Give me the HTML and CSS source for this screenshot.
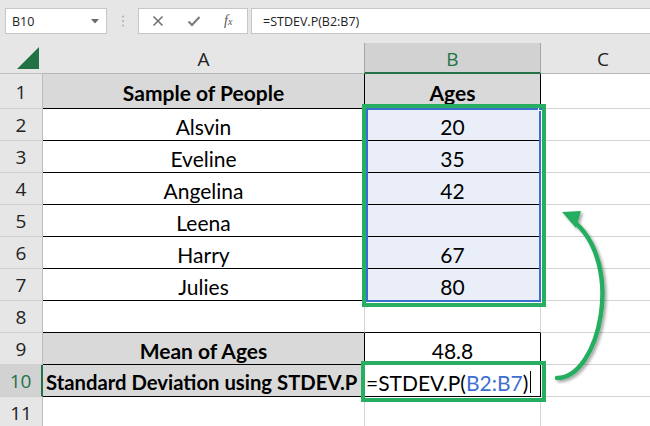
FILE: index.html
```html
<!DOCTYPE html>
<html>
<head>
<meta charset="utf-8">
<link rel="stylesheet" href="styles.css">
</head>
<body>
<div class="app">
  <div class="toolbar">
    <div class="namebox">
      <span class="nb-text">B10</span>
      <svg class="caret" width="8" height="5" viewBox="0 0 8 5"><path d="M0 0 H8 L4 4.5 Z" fill="#6b6b6b"/></svg>
    </div>
    <div class="grip">
      <svg width="4" height="12" viewBox="0 0 4 12"><circle cx="2" cy="1.5" r="1.1" fill="#b3b3b3"/><circle cx="2" cy="6" r="1.1" fill="#b3b3b3"/><circle cx="2" cy="10.5" r="1.1" fill="#b3b3b3"/></svg>
    </div>
    <div class="fxbox">
      <svg class="ico" width="12" height="12" viewBox="0 0 12 12"><path d="M1.5 1.5 L10.5 10.5 M10.5 1.5 L1.5 10.5" stroke="#6e6e6e" stroke-width="1.5" fill="none"/></svg>
      <svg class="ico" width="14" height="12" viewBox="0 0 14 12"><path d="M1.5 6.5 L5 10 L12.5 2" stroke="#7a7a7a" stroke-width="2" fill="none"/></svg>
      <span class="fx">f<span class="fx-x">x</span></span>
    </div>
    <div class="formula">=STDEV.P(B2:B7)</div>
  </div>

  <div class="sheet">
    <div class="corner"><svg width="23" height="23" viewBox="0 0 23 23"><path d="M0 22 L22 0 L22 22 Z" fill="#217346"/></svg></div>
    <div class="colh">A</div>
    <div class="colh sel">B</div>
    <div class="colh last">C</div>

    <div class="rowh">1</div>
    <div class="cell bd gray bold">Sample of People</div>
    <div class="cell bd gray bold">Ages</div>
    <div class="cell c"></div>

    <div class="rowh">2</div>
    <div class="cell bd">Alsvin</div>
    <div class="cell bd hl">20</div>
    <div class="cell c"></div>

    <div class="rowh">3</div>
    <div class="cell bd">Eveline</div>
    <div class="cell bd hl">35</div>
    <div class="cell c"></div>

    <div class="rowh">4</div>
    <div class="cell bd">Angelina</div>
    <div class="cell bd hl">42</div>
    <div class="cell c"></div>

    <div class="rowh">5</div>
    <div class="cell bd">Leena</div>
    <div class="cell bd hl"></div>
    <div class="cell c"></div>

    <div class="rowh">6</div>
    <div class="cell bd">Harry</div>
    <div class="cell bd hl">67</div>
    <div class="cell c"></div>

    <div class="rowh">7</div>
    <div class="cell bd">Julies</div>
    <div class="cell bd hl">80</div>
    <div class="cell c"></div>

    <div class="rowh">8</div>
    <div class="cell bb"></div>
    <div class="cell bb"></div>
    <div class="cell c"></div>

    <div class="rowh">9</div>
    <div class="cell bd gray bold">Mean of Ages</div>
    <div class="cell bd">48.8</div>
    <div class="cell c"></div>

    <div class="rowh active">10</div>
    <div class="cell bd gray bold left">Standard Deviation using STDEV.P</div>
    <div class="cell bd left edit">=STDEV.P(<span class="ref">B2:B7</span>)<span class="cursor"></span></div>
    <div class="cell c"></div>

    <div class="rowh">11</div>
    <div class="cell g"></div>
    <div class="cell g"></div>
    <div class="cell c"></div>
  </div>

  <div class="range-blue"><span class="handle"></span></div>
  <div class="mark mark-range"></div>
  <div class="mark mark-cell"></div>

  <svg class="arrow" width="650" height="426" viewBox="0 0 650 426">
    <defs>
      <filter id="sh" x="-50%" y="-50%" width="200%" height="200%">
        <feDropShadow dx="2" dy="2" stdDeviation="1.6" flood-color="#000" flood-opacity="0.35"/>
      </filter>
    </defs>
    <g filter="url(#sh)">
      <path d="M557 378 C600 378 626 262 572 220" stroke="#27ae60" stroke-width="4.5" fill="none" stroke-linecap="round"/>
      <path d="M562 212 L581 211 L576 228 Z" fill="#27ae60"/>
    </g>
  </svg>
</div>
</body>
</html>
```

FILE: styles.css
```css
* { box-sizing: border-box; }
html, body { margin: 0; padding: 0; }
body { background: #ffffff; overflow: hidden; }

.app {
  position: relative;
  width: 650px;
  height: 426px;
  overflow: hidden;
  font-family: Lato, "Liberation Sans", sans-serif;
}

/* ---------- formula bar ---------- */
.toolbar {
  height: 43px;
  background: #e6e6e6;
  display: flex;
  align-items: flex-start;
  padding-top: 8px;
  padding-left: 5px;
  font-family: "Open Sans", "Noto Sans", sans-serif;
}
.namebox {
  width: 102px;
  height: 26px;
  background: #fff;
  border: 1px solid #c6c6c6;
  display: flex;
  align-items: center;
  justify-content: space-between;
  padding: 0 7px 0 6px;
  font-size: 12.5px;
  color: #222;
}
.grip {
  width: 31px;
  height: 26px;
  display: flex;
  align-items: center;
  justify-content: center;
}
.fxbox {
  width: 110px;
  height: 26px;
  background: #fff;
  border: 1px solid #c6c6c6;
  display: flex;
  align-items: center;
  padding-left: 13px;
  gap: 23px;
}
.fx {
  font-family: "Liberation Serif", serif;
  font-style: italic;
  font-size: 14px;
  color: #555;
  margin-left: 0;
}
.fx-x { font-size: 10px; }
.formula {
  flex: 1;
  margin-left: 3px;
  height: 26px;
  background: #fff;
  border: 1px solid #c6c6c6;
  border-right: none;
  display: flex;
  align-items: center;
  padding-left: 11px;
  font-size: 12.5px;
  color: #222;
}

/* ---------- sheet ---------- */
.sheet {
  display: grid;
  grid-template-columns: 43px 322px 176px 124px;
  grid-template-rows: 31px 35px repeat(10, 32px);
  width: 665px;
}
.corner {
  background: #e6e6e6;
  border-bottom: 1px solid #c0c0c0;
  display: flex;
  align-items: flex-end;
  justify-content: flex-end;
  padding: 0 3px 3px 0;
}
.colh {
  background: #e6e6e6;
  border-bottom: 1px solid #b5b5b5;
  border-right: 1px solid #c0c0c0;
  display: flex;
  align-items: center;
  justify-content: center;
  font-family: "Open Sans", "Noto Sans", sans-serif;
  font-size: 19px;
  color: #222;
  padding-top: 2px;
}
.colh.sel {
  background: #d2d2d2;
  color: #217346;
  border-bottom: 2px solid #217346;
  border-right: 1px solid #a5a5a5;
  border-left: 1px solid #a5a5a5;
  margin-left: -1px;
}
.colh.last { border-right: none; }

.rowh {
  background: #e6e6e6;
  border-right: 1px solid #bdbdbd;
  border-bottom: 1px solid #cfcfcf;
  display: flex;
  align-items: center;
  justify-content: center;
  font-family: "Open Sans", "Noto Sans", sans-serif;
  font-size: 19px;
  color: #222;
  padding-top: 1px;
}
.rowh.active {
  background: #d2d2d2;
  color: #217346;
  border-right: 2px solid #217346;
}

.cell {
  border-right: 1px solid #d4d4d4;
  border-bottom: 1px solid #d4d4d4;
  display: flex;
  align-items: center;
  justify-content: center;
  font-size: 21px;
  color: #000;
  padding-top: 3px;
  white-space: nowrap;
  overflow: visible;
}
.cell.bd { border-right-color: #000; border-bottom-color: #000; }
.cell.bb { border-bottom-color: #000; }
.cell.c { border-right: none; }
.cell.gray { background: #d9d9d9; }
.cell.bold { font-weight: 700; }
.cell.left { justify-content: flex-start; padding-left: 3px; font-size: 20.3px; }
.cell.hl { background: #e9eef8; }
.cell.edit { font-size: 21px; padding-left: 1px; }
.ref { color: #3d6fcf; }
.cursor {
  display: inline-block;
  width: 1px;
  height: 22px;
  background: #000;
  margin-left: 2px;
}

/* ---------- overlays ---------- */
.range-blue {
  position: absolute;
  left: 366px;
  top: 108px;
  width: 175px;
  height: 194px;
  border: 2px solid #3a6fd0;
}
.handle {
  position: absolute;
  right: -4px;
  top: -4px;
  width: 5px;
  height: 5px;
  background: #3a6fd0;
  border: 1px solid #fff;
}
.mark {
  position: absolute;
  border: 4px solid #27ae60;
}
.mark-range { left: 362px; top: 104px; width: 184px; height: 203px; }
.mark-cell { left: 361px; top: 361px; width: 185px; height: 41px; }

.arrow {
  position: absolute;
  left: 0;
  top: 0;
  pointer-events: none;
}
```
